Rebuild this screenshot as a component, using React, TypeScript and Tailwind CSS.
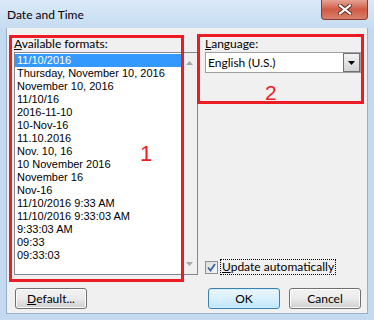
import React from "react";

const ITEMS = [
  "11/10/2016",
  "Thursday, November 10, 2016",
  "November 10, 2016",
  "11/10/16",
  "2016-11-10",
  "10-Nov-16",
  "11.10.2016",
  "Nov. 10, 16",
  "10 November 2016",
  "November 16",
  "Nov-16",
  "11/10/2016 9:33 AM",
  "11/10/2016 9:33:03 AM",
  "9:33:03 AM",
  "09:33",
  "09:33:03",
];

const ui = { fontFamily: "Lato, 'Liberation Sans', sans-serif" };
const listFont = { fontFamily: "'Liberation Sans', Arial, sans-serif" };

function WinButton({ label, ul, primary }: { label: string; ul?: string; primary?: boolean }) {
  const rest = ul ? label.slice(1) : label;
  return (
    <button
      className={`w-[72px] h-[21px] rounded-[3px] border text-[12px] leading-none text-black flex items-center justify-center ${
        primary
          ? "border-[#3c7fb1] bg-gradient-to-b from-[#eaf6fd] via-[#d9f0fc] to-[#bee6fd] shadow-[inset_0_0_0_1px_#d5eefc]"
          : "border-[#707070] bg-gradient-to-b from-[#f2f2f2] via-[#ebebeb] to-[#cfcfcf] shadow-[inset_0_0_0_1px_#fcfcfc]"
      }`}
      style={ui}
    >
      {ul && <span className="underline">{ul}</span>}
      {rest}
    </button>
  );
}

export default function App() {
  return (
    <div className="relative w-[374px] h-[320px] overflow-hidden bg-[#c4daf1]" style={ui}>
      {/* title bar */}
      <div className="h-[28px] flex items-center pl-[7px] bg-gradient-to-b from-[#dbe9f8] to-[#c6dcf2]">
        <span className="text-[12px] text-black pt-[1px]">Date and Time</span>
      </div>
      <div className="absolute top-0 right-[6px] w-[47px] h-[20px] rounded-b-[4px] border border-t-0 border-[#8a3a30] bg-gradient-to-b from-[#e5a394] via-[#cf5a45] to-[#d8806c] flex items-center justify-center">
        <svg width="14" height="11" viewBox="0 0 14 11">
          <path d="M2 1.5 L12 9.5 M12 1.5 L2 9.5" stroke="#5a2a24" strokeWidth="4" strokeLinecap="square" />
          <path d="M2 1.5 L12 9.5 M12 1.5 L2 9.5" stroke="#ffffff" strokeWidth="2.2" strokeLinecap="square" />
        </svg>
      </div>

      {/* client area */}
      <div className="ml-[6px] w-[362px] h-[286px] border border-t-0 border-[#9aafc6] bg-[#f0f0f0] pl-[7px] pr-[5px] pt-[9px] flex flex-col">
        <div className="flex gap-[7px]">
          {/* left column */}
          <div className="w-[184px] flex flex-col">
            <div className="h-[15px] text-[12px] leading-[13px] text-black">
              <span className="underline">A</span>vailable formats:
            </div>
            <div className="h-[223px] border border-[#828790] bg-white flex">
              <div className="w-[166px] pt-[1px]" style={listFont}>
                {ITEMS.map((t, i) => (
                  <div
                    key={t}
                    className={`h-[13px] leading-[13px] text-[11px] pl-[2px] whitespace-nowrap ${
                      i === 0 ? "bg-[#3399ff] text-white" : "text-black"
                    }`}
                  >
                    {t}
                  </div>
                ))}
              </div>
              <div className="w-[16px] flex flex-col items-center justify-between py-[8px] bg-[#f0f0f0]">
                <svg width="7" height="4" viewBox="0 0 7 4">
                  <path d="M0 4 L3.5 0 L7 4 Z" fill="#a8a8a8" />
                </svg>
                <svg width="7" height="4" viewBox="0 0 7 4">
                  <path d="M0 0 L3.5 4 L7 0 Z" fill="#a8a8a8" />
                </svg>
              </div>
            </div>
          </div>

          {/* right column */}
          <div className="w-[156px] flex flex-col">
            <div className="h-[15px] text-[12px] leading-[13px] text-black">
              <span className="underline">L</span>anguage:
            </div>
            <div className="h-[21px] border border-[#a0a0a0] bg-white flex items-center">
              <span className="flex-1 pl-[2px] text-[12px] text-black">English (U.S.)</span>
              <div className="w-[17px] h-[19px] border border-[#707070] bg-gradient-to-b from-[#f2f2f2] to-[#d4d4d4] flex items-center justify-center">
                <svg width="7" height="4" viewBox="0 0 7 4">
                  <path d="M0 0 L7 0 L3.5 4 Z" fill="#000" />
                </svg>
              </div>
            </div>
            <div className="mt-auto h-[16px] flex items-center gap-[3px]">
              <div className="w-[13px] h-[13px] border border-[#8e8f8f] bg-gradient-to-br from-[#dcdcdc] to-[#f8f8f8] flex items-center justify-center">
                <svg width="9" height="9" viewBox="0 0 9 9">
                  <path d="M1 4.5 L3.5 7.5 L8 1" fill="none" stroke="#3a5fa0" strokeWidth="1.8" />
                </svg>
              </div>
              <span className="text-[12px] leading-[14px] text-black outline outline-1 outline-dotted outline-black px-[1px]">
                <span className="underline">U</span>pdate automatically
              </span>
            </div>
          </div>
        </div>

        {/* buttons */}
        <div className="mt-[13px] flex items-center pl-[1px] pr-[1px]">
          <WinButton label="Default..." ul="D" />
          <div className="flex-1" />
          <WinButton label="OK" primary />
          <div className="w-[9px]" />
          <WinButton label="Cancel" />
        </div>
      </div>

      {/* annotations */}
      <div className="absolute left-[9px] top-[35px] w-[175px] h-[247px] border-[3px] border-[#ec1c24]" />
      <div className="absolute left-[197px] top-[34px] w-[167px] h-[70px] border-[3px] border-[#ec1c24]" />
      <div className="absolute left-[140px] top-[143px] text-[22px] leading-[22px] text-[#ec1c24]" style={listFont}>
        1
      </div>
      <div className="absolute left-[265px] top-[82px] text-[21px] leading-[21px] text-[#ec1c24]" style={listFont}>
        2
      </div>
    </div>
  );
}
